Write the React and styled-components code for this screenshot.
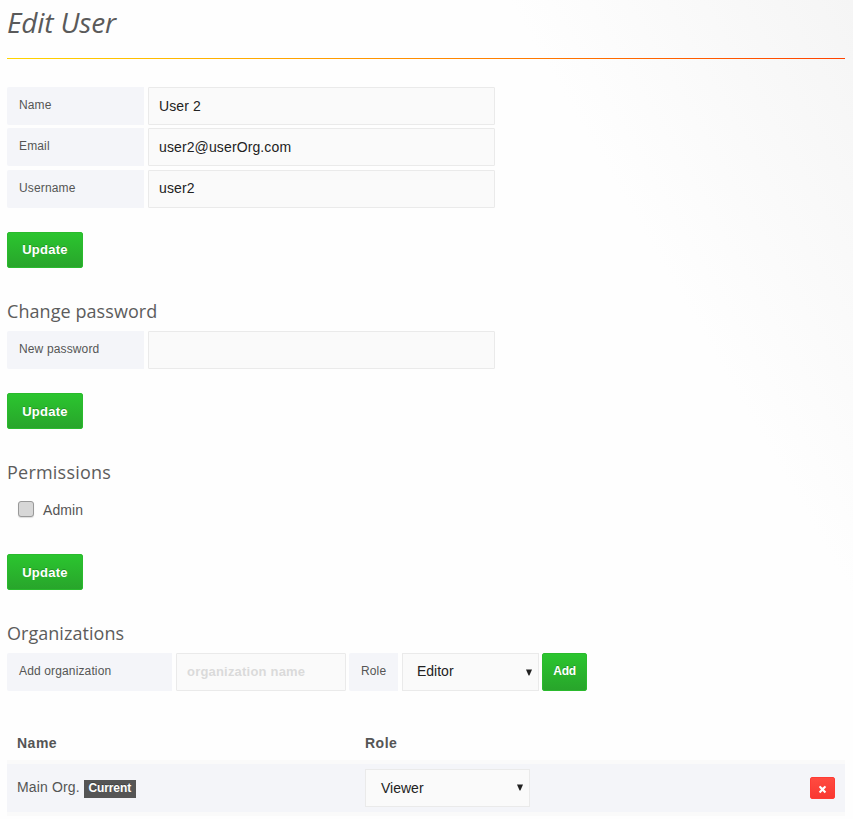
import React from "react";
import styled, { createGlobalStyle } from "styled-components";

const Global = createGlobalStyle`
  *, *::before, *::after { box-sizing: border-box; }
  html, body { margin: 0; padding: 0; }
  body { overflow: hidden; }
`;

const Page = styled.main`
  height: 819px;
  overflow: hidden;
  padding: 0 8px 0 7px;
  color: #555;
  font: 14px/20px "Liberation Sans", Arial, sans-serif;
  background: linear-gradient(60deg, #fefefe 74%, #f5f5f5 100%);
`;

const Title = styled.h1`
  height: 58px;
  margin: 0;
  padding-top: 3px;
  font: italic 400 28px/38px "Open Sans", sans-serif;
  letter-spacing: -0.15px;
  color: #5a5a5a;
`;

const Rule = styled.div`
  height: 1px;
  margin-bottom: 28px;
  background: linear-gradient(90deg, #ffd500 0%, #ff4400 99%, #ff4400 100%);
`;

const Section = styled.section`
  height: ${(p) => p.$height}px;
`;

const Heading = styled.h3`
  height: 34px;
  margin: 0;
  padding-top: 2px;
  font: 400 18px/24px "Open Sans", sans-serif;
  letter-spacing: ${(p) => p.$spacing || 0}px;
  color: #5c5c5c;
`;

const Fields = styled.div`
  display: grid;
  grid-template-rows: ${(p) => p.$rows};
  margin-bottom: 24px;
`;

const FieldRow = styled.div`
  display: flex;
  height: 38px;
  gap: 4px;
`;

const Label = styled.label`
  width: ${(p) => p.$width || 137}px;
  height: 38px;
  padding: 0 0 0 12px;
  border-radius: 2px 0 0 2px;
  background: #f4f5f9;
  font-size: 12px;
  line-height: 37px;
  letter-spacing: 0.14px;
  white-space: nowrap;
`;

const Input = styled.input`
  width: ${(p) => p.$width || 347}px;
  height: 38px;
  padding: 0 10px ${(p) => (p.$raised ? 2 : 0)}px;
  border: 1px solid #eaeaea;
  border-radius: 1px;
  outline: 0;
  background: #fafafa;
  color: #222;
  font: 14px "Liberation Sans", Arial, sans-serif;
  letter-spacing: 0.12px;
  &::placeholder {
    color: #dadada;
    font-weight: 700;
    font-size: 13px;
    letter-spacing: 0.2px;
    opacity: 1;
  }
`;

const Button = styled.button`
  width: ${(p) => (p.$compact ? 45 : 76)}px;
  height: ${(p) => (p.$compact ? 38 : 36)}px;
  padding: ${(p) => (p.$lowered ? "1px 0 0" : p.$compact ? "0 0 2px" : "0 0 1px")};
  border: 1px solid #2aba2d;
  border-radius: 2px;
  background: linear-gradient(#2bc52f, #28a52b);
  color: #fff;
  font: ${(p) => (p.$compact ? "700 12px" : "700 13px")} "Liberation Sans", Arial, sans-serif;
  letter-spacing: ${(p) => (p.$compact ? -0.3 : 0.25)}px;
  text-shadow: 0 -1px 0 rgba(0, 0, 0, 0.2);
`;

const CheckRow = styled.label`
  display: flex;
  align-items: center;
  height: 20px;
  margin: 8px 0 0 11px;
  gap: 9px;
  letter-spacing: 0.1px;
`;

const Checkbox = styled.input`
  appearance: none;
  width: 16px;
  height: 16px;
  margin: 0 0 2px;
  border: 1px solid #999;
  border-radius: 3px;
  background: #d7d7d7;
  box-shadow: 0 1px 1px #ddd;
`;

const SelectBox = styled.div`
  display: flex;
  align-items: center;
  justify-content: space-between;
  width: ${(p) => p.$width}px;
  height: 38px;
  padding: 0 6px 0 ${(p) => p.$inset || 14}px;
  border: 1px solid #eaeaea;
  background: #fafafa;
  color: #222;
`;

const SelectValue = styled.span`
  padding-bottom: ${(p) => (p.$raised ? 2 : 0)}px;
`;

const ArrowIcon = styled.svg`
  margin-bottom: ${(p) => (p.$raised ? 0 : 2)}px;
`;

const OrgForm = styled.div`
  display: flex;
  height: 38px;
`;

const Gap = styled.span`
  width: ${(p) => p.$width}px;
`;

const Table = styled.div`
  margin-top: 35px;
`;

const TableRow = styled.div`
  display: grid;
  grid-template-columns: 348px 1fr 25px;
  align-items: center;
  padding: 0 10px;
`;

const TableHead = styled(TableRow)`
  height: 34px;
  font-weight: 700;
  letter-spacing: 0.5px;
`;

const TableBody = styled(TableRow)`
  height: 56px;
  border-top: 4px solid #fafafa;
  border-bottom: 4px solid #fafafa;
  background: #f4f5f9;
  background-clip: padding-box;
`;

const OrgCell = styled.div`
  display: flex;
  align-items: center;
  padding-bottom: 2px;
  gap: 4px;
  letter-spacing: 0.14px;
`;

const Badge = styled.span`
  width: 52px;
  height: 18px;
  margin-top: 4px;
  background: #555;
  color: #fff;
  font: 700 12px/16px "Liberation Sans", Arial, sans-serif;
  letter-spacing: -0.1px;
  text-align: center;
  text-shadow: 0 -1px 0 rgba(0, 0, 0, 0.25);
`;

const OrgName = styled.span`
  margin-bottom: 1px;
`;

const RemoveButton = styled.button`
  display: flex;
  align-items: center;
  justify-content: center;
  width: 25px;
  height: 22px;
  padding: 3px 0 0;
  border: 1px solid #ff3b34;
  border-radius: 2px;
  background: linear-gradient(#ff4b40, #f93832);
`;

function Select({ value, width, inset, raised }) {
  return (
    <SelectBox role="combobox" aria-expanded="false" $width={width} $inset={inset}>
      <SelectValue $raised={raised}>{value}</SelectValue>
      <ArrowIcon width="6" height="7" viewBox="0 0 6 7" aria-hidden="true" $raised={raised}>
        <path d="M0 .5H6L3.4 6.5H2.6Z" fill="#222" />
      </ArrowIcon>
    </SelectBox>
  );
}

function Field({ label, value, type = "text", raised }) {
  return (
    <FieldRow>
      <Label>{label}</Label>
      <Input type={type} defaultValue={value} aria-label={label} $raised={raised} />
    </FieldRow>
  );
}

export default function App() {
  return (
    <Page>
      <Global />
      <Title>Edit User</Title>
      <Rule />
      <Section $height={210}>
        <Fields $rows="41px 42px 38px">
          <Field label="Name" value="User 2" />
          <Field label="Email" value="user2@userOrg.com" />
          <Field label="Username" value="user2" raised />
        </Fields>
        <Button>Update</Button>
      </Section>
      <Section $height={161}>
        <Heading $spacing={0.07}>Change password</Heading>
        <Fields $rows="38px">
          <Field label="New password" value="" type="password" />
        </Fields>
        <Button $lowered>Update</Button>
      </Section>
      <Section $height={161}>
        <Heading $spacing={0.22}>Permissions</Heading>
        <Fields $rows="38px">
          <CheckRow>
            <Checkbox type="checkbox" />
            <span>Admin</span>
          </CheckRow>
        </Fields>
        <Button $lowered>Update</Button>
      </Section>
      <section>
        <Heading $spacing={0.04}>Organizations</Heading>
        <OrgForm>
          <Label $width={165}>Add organization</Label>
          <Gap $width={4} />
          <Input $width={170} placeholder="organization name" $raised />
          <Gap $width={3} />
          <Label $width={49}>Role</Label>
          <Gap $width={4} />
          <Select value="Editor" width={137} raised />
          <Gap $width={3} />
          <Button $compact>Add</Button>
        </OrgForm>
        <Table>
          <TableHead>
            <span>Name</span>
            <span>Role</span>
          </TableHead>
          <TableBody>
            <OrgCell>
              <OrgName>Main Org.</OrgName>
              <Badge>Current</Badge>
            </OrgCell>
            <Select value="Viewer" width={165} inset={15} />
            <RemoveButton aria-label="Remove">
              <svg width="9" height="9" viewBox="0 0 9 9">
                <path d="M.8 2 2.3.7 4.5 2.8 6.7.7 8.2 2 6 4.4 8.2 6.8 6.7 8.2 4.5 6.1 2.3 8.2.8 6.8 3 4.4Z" fill="#fff" />
              </svg>
            </RemoveButton>
          </TableBody>
        </Table>
      </section>
    </Page>
  );
}
